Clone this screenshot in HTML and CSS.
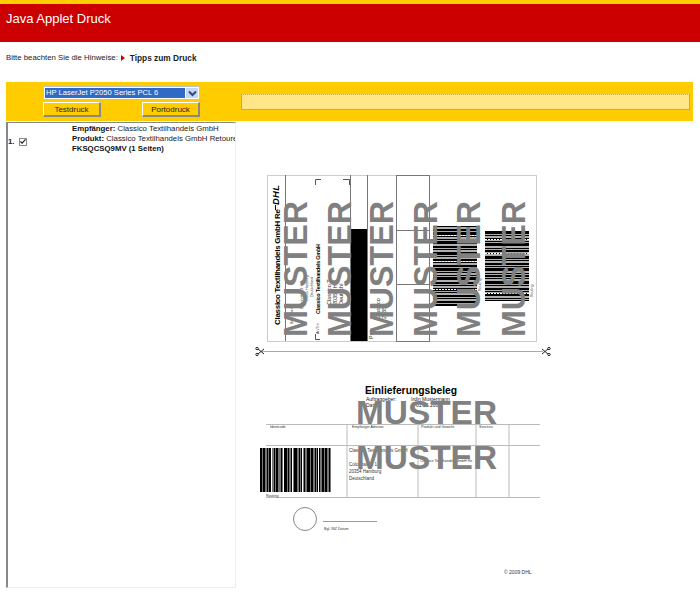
FILE: index.html
```html
<!DOCTYPE html>
<html lang="de">
<head>
    <meta charset="UTF-8">
    <meta name="viewport" content="width=device-width, initial-scale=1.0">
    <title>Java Applet Druck</title>
    <link rel="stylesheet" href="styles.css">
</head>
<body>
    <header class="page-header">
        <h1>Java Applet Druck</h1>
    </header>

    <p class="notice">
        <span>Bitte beachten Sie die Hinweise:</span>
        <span class="notice-arrow"></span>
        <a class="notice-link" href="#">Tipps zum Druck</a>
    </p>

    <div class="toolbar">
        <div class="controls">
            <div class="printer-select">
                <span class="printer-value">HP LaserJet P2050 Series PCL 6</span>
                <span class="printer-arrow">
                    <svg width="9" height="7" viewBox="0 0 9 7"><path d="M1 1.5 L4.5 5 L8 1.5" fill="none" stroke="#2c4a86" stroke-width="2"/></svg>
                </span>
            </div>
            <div class="buttons">
                <button class="print-btn" type="button">Testdruck</button>
                <button class="print-btn" type="button">Portodruck</button>
            </div>
        </div>
        <div class="status-box"></div>
    </div>

    <div class="main">
        <div class="job-list">
            <div class="job">
                <span class="job-number">1.</span>
                <span class="job-check">
                    <svg width="7" height="7" viewBox="0 0 7 7"><path d="M0.5 3.5 L2.5 5.5 L6.5 1" fill="none" stroke="#222" stroke-width="1.4"/></svg>
                </span>
                <div class="job-text">
                    <div><b>Empfänger:</b> Classico Textilhandels GmbH</div>
                    <div><b>Produkt:</b> Classico Textilhandels GmbH Retoure</div>
                    <div><b>FKSQCSQ9MV (1 Seiten)</b></div>
                </div>
            </div>
        </div>

        <div class="preview">
            <svg class="sheet" width="464" height="466" viewBox="236 122 464 466">
                <!-- Label, printed sideways -->
                <rect x="267.5" y="176.5" width="269" height="166" fill="#fff" stroke="#ccc"/>
                <line x1="285.5" y1="176" x2="285.5" y2="342" stroke="#777"/>
                <line x1="350.5" y1="176" x2="350.5" y2="342" stroke="#777"/>
                <rect x="351" y="230" width="16" height="112" fill="#000"/>
                <line x1="367.5" y1="176" x2="367.5" y2="342" stroke="#777"/>
                <rect x="396.5" y="176.5" width="33" height="166" fill="none" stroke="#777"/>
                <line x1="396" y1="231.5" x2="429" y2="231.5" stroke="#777"/>
                <line x1="396" y1="285.5" x2="429" y2="285.5" stroke="#777"/>
                <path d="M315.5 186 V180.5 H321 M343 180.5 H349.5 V186 M315.5 335 V340.5 H320" fill="none" stroke="#555"/>

                <g class="label-text">
                    <text class="sender" transform="translate(280 326) rotate(-90)" textLength="116">Classico Textilhandels GmbH Re</text>
                    <text class="dhl" transform="translate(279 206) rotate(-90)" textLength="20">DHL</text>
                    <line x1="275.5" y1="206" x2="275.5" y2="211" stroke="#000"/>
                    <text class="recipient" transform="translate(320 315) rotate(-90)" textLength="70">Classico Textilhandels GmbH</text>
                    <text class="tiny" transform="translate(293 325) rotate(-90)">Bitte Warten</text>
                    <text class="tiny" transform="translate(303 310) rotate(-90)">Bahnhofstr. 3</text>
                    <text class="tiny" transform="translate(308 302) rotate(-90)">20095 Hamburg</text>
                    <text class="tiny" transform="translate(313 298) rotate(-90)">Deutschland</text>
                    <text class="tiny" transform="translate(319 335) rotate(-90)">An/Tro</text>
                    <text class="small" transform="translate(331 306) rotate(-90)">Classico T</text>
                    <text class="small" transform="translate(337 306) rotate(-90)">20354 Ha</text>
                    <text class="small" transform="translate(343 306) rotate(-90)">Deutschl</text>
                    <text class="small" transform="translate(373 340) rotate(-90)">Pat</text>
                    <text class="small" transform="translate(380 320) rotate(-90)">Classico</text>
                    <text class="small" transform="translate(386 320) rotate(-90)">20354</text>
                    <text class="tiny" transform="translate(481 292) rotate(-90)">Routing</text>
                    <text class="tiny" transform="translate(533 298) rotate(-90)">Routing</text>
                </g>

                <!-- Barcodes on the label -->
                <rect x="433" y="227" width="44" height="80" fill="#b0b0b0"/>
                <line x1="455" y1="227" x2="455" y2="307" stroke="#000" stroke-width="44" stroke-dasharray="1 2 2 1 3 1 1 2 1 1 3 2 2 1 1 2 3 1 1 2 2 1"/>
                <rect x="485" y="232" width="44" height="70" fill="#b0b0b0"/>
                <line x1="507" y1="232" x2="507" y2="302" stroke="#000" stroke-width="44" stroke-dasharray="3 1 1 2 2 1 1 1 3 2 1 1 2 1 1 2"/>
                <g stroke="#fff" stroke-dasharray="2 1">
                    <line x1="433" y1="236.5" x2="477" y2="236.5"/>
                    <line x1="433" y1="262.5" x2="477" y2="262.5"/>
                    <line x1="433" y1="290.5" x2="477" y2="290.5"/>
                    <line x1="485" y1="240.5" x2="529" y2="240.5"/>
                    <line x1="485" y1="254.5" x2="529" y2="254.5"/>
                    <line x1="485" y1="294.5" x2="529" y2="294.5"/>
                </g>

                <!-- Cut line -->
                <line x1="262" y1="352.5" x2="543" y2="352.5" stroke="#aaa"/>
                <g class="scissors" fill="none" stroke="#222">
                    <path d="M258 350 L264 355 M258 355 L264 350"/>
                    <circle cx="257" cy="349.5" r="1.2"/>
                    <circle cx="257" cy="355.5" r="1.2"/>
                    <path d="M548 350 L542 355 M548 355 L542 350"/>
                    <circle cx="549" cy="349.5" r="1.2"/>
                    <circle cx="549" cy="355.5" r="1.2"/>
                </g>

                <!-- Receipt -->
                <text class="receipt-title" x="365" y="395">Einlieferungsbeleg</text>
                <text class="receipt-meta" x="366" y="402">Auftraggeber:</text>
                <text class="receipt-meta" x="411" y="402">Irdin Mustermann</text>
                <text class="receipt-meta" x="366" y="408">Datum:</text>
                <text class="receipt-meta" x="416" y="408">01.06.2009</text>

                <g stroke="#bbb">
                    <line x1="266" y1="425.5" x2="540" y2="425.5"/>
                    <line x1="266" y1="446.5" x2="540" y2="446.5"/>
                    <line x1="266" y1="498.5" x2="540" y2="498.5"/>
                    <line x1="347" y1="425" x2="347" y2="498"/>
                    <line x1="418" y1="425" x2="418" y2="498"/>
                    <line x1="476" y1="425" x2="476" y2="498"/>
                    <line x1="509" y1="425" x2="509" y2="498"/>
                </g>
                <text class="tiny" x="270" y="429">Identcode</text>
                <text class="tiny" x="352" y="429">Empfänger Adresse</text>
                <text class="tiny" x="421" y="429">Produkt und Gewicht</text>
                <text class="tiny" x="479" y="429">Services</text>

                <rect x="260" y="449" width="71" height="44" fill="#777"/>
                <line x1="260" y1="471" x2="331" y2="471" stroke="#000" stroke-width="44" stroke-dasharray="2 1 2 2 1 1 3 2 1 1 2 3 1 2 3 1 1 2 2 1 3 2 1 1 2 1 1 2 3 1 2 2 1 1 3 2"/>
                <line x1="271.5" y1="449" x2="271.5" y2="493" stroke="#fff" stroke-width="1"/>
                <line x1="283.5" y1="449" x2="283.5" y2="493" stroke="#fff" stroke-width="1"/>
                <line x1="292.5" y1="449" x2="292.5" y2="493" stroke="#fff" stroke-width="1"/>
                <line x1="302.5" y1="449" x2="302.5" y2="493" stroke="#fff" stroke-width="1"/>
                <line x1="318.5" y1="449" x2="318.5" y2="493" stroke="#fff" stroke-width="1"/>
                <text class="tiny" x="266" y="498">Routing</text>

                <text class="address" x="349" y="453">Classico Textilhandels GmbH</text>
                <text class="address" x="349" y="467">Colonnaden 1</text>
                <text class="address" x="349" y="474">20354 Hamburg</text>
                <text class="address" x="349" y="481">Deutschland</text>
                <text class="tiny" x="420" y="463">Classico Textilhandels GmbH Re</text>

                <circle cx="305" cy="520" r="11.5" fill="none" stroke="#888"/>
                <line x1="323" y1="522.5" x2="377" y2="522.5" stroke="#999"/>
                <text class="tiny" x="324" y="531">Bgl. INZ Datum</text>
                <text class="copyright" x="504" y="575">© 2009 DHL</text>

                <!-- Watermarks -->
                <g class="watermark">
                    <text transform="translate(307 338) rotate(-90)" textLength="136" lengthAdjust="spacingAndGlyphs">MUSTER</text>
                    <text transform="translate(351 338) rotate(-90)" textLength="136" lengthAdjust="spacingAndGlyphs">MUSTER</text>
                    <text transform="translate(393 338) rotate(-90)" textLength="136" lengthAdjust="spacingAndGlyphs">MUSTER</text>
                    <text transform="translate(437 338) rotate(-90)" textLength="136" lengthAdjust="spacingAndGlyphs">MUSTER</text>
                    <text transform="translate(480 338) rotate(-90)" textLength="136" lengthAdjust="spacingAndGlyphs">MUSTER</text>
                    <text transform="translate(525 338) rotate(-90)" textLength="136" lengthAdjust="spacingAndGlyphs">MUSTER</text>
                    <text x="356" y="425" textLength="141" lengthAdjust="spacingAndGlyphs">MUSTER</text>
                    <text x="356" y="470" textLength="141" lengthAdjust="spacingAndGlyphs">MUSTER</text>
                </g>
            </svg>
        </div>
    </div>
</body>
</html>
```

FILE: styles.css
```css
* {
    box-sizing: border-box;
}

body {
    margin: 0;
    background: #fff;
    font-family: "Liberation Sans", Arial, sans-serif;
    color: #222;
    overflow: hidden;
}

.page-header {
    height: 42px;
    background: #cc0000;
    border-top: 4px solid #ffcc00;
    padding: 7px 6px 0;
}

.page-header h1 {
    margin: 0;
    font-size: 13px;
    line-height: 16px;
    font-weight: normal;
    color: #fff;
}

.notice {
    display: flex;
    align-items: center;
    height: 11px;
    margin: 10px 0 19px 6px;
    font-size: 7.8px;
}

.notice-arrow {
    width: 0;
    height: 0;
    margin: 0 5px 0 3px;
    border-left: 4px solid #cc0000;
    border-top: 3.5px solid transparent;
    border-bottom: 3.5px solid transparent;
}

.notice-link {
    color: #222;
    font-size: 8.3px;
    font-weight: bold;
    text-decoration: none;
}

.toolbar {
    display: flex;
    align-items: center;
    width: 687px;
    height: 39px;
    margin-left: 6px;
    padding-right: 3px;
    background: #ffcc00;
}

.controls {
    width: 157px;
    margin-left: 37px;
    margin-right: 41px;
}

.printer-select {
    display: flex;
    height: 14px;
    padding: 1px;
    background: #fff;
    border: 1px solid #b5c4d8;
    margin-bottom: 2px;
}

.printer-value {
    flex: 1;
    padding-left: 1px;
    background: #316ac5;
    color: #fff;
    font-size: 7.6px;
    line-height: 10px;
    white-space: nowrap;
}

.printer-arrow {
    display: flex;
    align-items: center;
    justify-content: center;
    width: 12px;
    margin-left: 1px;
    background: #c8d7f2;
}

.buttons {
    display: flex;
    justify-content: space-between;
}

.print-btn {
    width: 58px;
    height: 15px;
    padding: 0;
    background: #ffcc00;
    border: 1px solid;
    border-color: #fff #888 #888 #fff;
    border-right-width: 2px;
    border-bottom-width: 2px;
    font-family: inherit;
    font-size: 8px;
    color: #222;
}

.status-box {
    flex: 1;
    height: 16px;
    background: #ffe688;
    border: 1px solid #b3ab85;
    border-top-style: dotted;
}

.main {
    display: flex;
    height: 467px;
}

.job-list {
    width: 230px;
    height: 466px;
    margin: 1px 0 0 6px;
    border-top: 1px solid #888;
    border-left: 2px solid #888;
    border-right: 1px solid #eee;
    border-bottom: 1px solid #eee;
    overflow: hidden;
}

.job {
    display: flex;
    align-items: center;
    height: 37px;
    font-size: 7.8px;
    white-space: nowrap;
}

.job-number {
    flex: none;
    width: 11px;
    font-weight: bold;
}

.job-check {
    flex: none;
    display: flex;
    align-items: center;
    justify-content: center;
    width: 8px;
    height: 8px;
    margin-right: 45px;
    border: 1px solid #888;
    background: #fff;
}

.job-text {
    align-self: flex-start;
    line-height: 10px;
    padding-top: 1px;
}

.job-text b {
    color: #111;
}

.preview {
    flex: 1;
}

.sheet {
    display: block;
    font-family: "Liberation Sans", Arial, sans-serif;
}

.sender {
    font-size: 8px;
    font-weight: bold;
}

.dhl {
    font-size: 9.5px;
    font-weight: bold;
    font-style: italic;
}

.recipient {
    font-size: 5.5px;
    font-weight: bold;
}

.tiny {
    font-size: 3.6px;
    fill: #333;
}

.small {
    font-size: 5.5px;
    fill: #222;
}

.address {
    font-size: 4.5px;
    fill: #333;
}

.copyright {
    font-size: 5px;
    fill: #333;
}

.receipt-meta {
    font-size: 5px;
    fill: #222;
}

.receipt-title {
    font-size: 10.3px;
    font-weight: bold;
    fill: #000;
}

.watermark text {
    font-size: 34px;
    font-weight: bold;
    fill: #808080;
}
```
